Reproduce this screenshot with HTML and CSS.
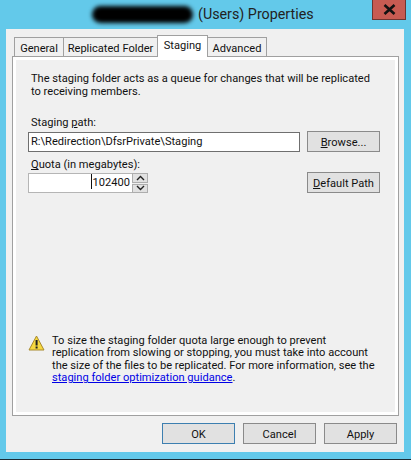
FILE: index.html
```html
<!DOCTYPE html>
<html>
<head>
    <title>(Users) Properties</title>
    <meta name="viewport" content="width=device-width, initial-scale=1.0">
    <link rel="stylesheet" href="styles.css">
</head>
<body>
    <div class="window">
        <div class="titlebar">
            <div class="title">
                <span class="redacted"></span>
                <span>(Users) Properties</span>
            </div>
            <div class="close">
                <svg width="13" height="11" viewBox="0 0 13 11"><path d="M1.5 1 L11.5 10 M11.5 1 L1.5 10" stroke="#111" stroke-width="2.6" fill="none"/></svg>
            </div>
        </div>
        <div class="dialog">
            <div class="tabs">
                <div class="tab tab-general">General</div>
                <div class="tab tab-replicated">Replicated Folder</div>
                <div class="tab tab-staging active">Staging</div>
                <div class="tab tab-advanced">Advanced</div>
            </div>
            <div class="panel">
                <div class="panel-inner">
                    <p class="intro">The staging folder acts as a queue for changes that will be replicated to receiving members.</p>
                    <div class="path-label">Staging <u>p</u>ath:</div>
                    <div class="row">
                        <div class="field path-field">R:\Redirection\DfsrPrivate\Staging</div>
                        <button class="btn side-btn"><u>B</u>rowse...</button>
                    </div>
                    <div class="quota-label"><u>Q</u>uota (in megabytes):</div>
                    <div class="row quota-row">
                        <div class="spinner">
                            <div class="field quota-field"><span class="caret"></span>102400</div>
                            <div class="spin-btns">
                                <div class="spin-btn">
                                    <svg width="9" height="6" viewBox="0 0 9 6"><path d="M1 5 L4.5 1.5 L8 5" stroke="#222" stroke-width="1.4" fill="none"/></svg>
                                </div>
                                <div class="spin-btn">
                                    <svg width="9" height="6" viewBox="0 0 9 6"><path d="M1 1 L4.5 4.5 L8 1" stroke="#222" stroke-width="1.4" fill="none"/></svg>
                                </div>
                            </div>
                        </div>
                        <button class="btn side-btn"><u>D</u>efault Path</button>
                    </div>
                    <div class="warning">
                        <svg class="warn-icon" width="17" height="16" viewBox="0 0 17 16">
                            <path d="M8.5 1 L16 15 L1 15 Z" fill="#f7d83f" stroke="#a88a2e" stroke-width="1" stroke-linejoin="round"/>
                            <rect x="7.6" y="5" width="2" height="5.5" fill="#222"/>
                            <rect x="7.6" y="11.5" width="2" height="2" fill="#222"/>
                        </svg>
                        <p class="warn-text">To size the staging folder quota large enough to prevent replication from slowing or stopping, you must take into account the size of the files to be replicated. For more information, see the <a href="#">staging folder optimization guidance</a>.</p>
                    </div>
                </div>
            </div>
            <div class="footer">
                <button class="btn foot-btn default">OK</button>
                <button class="btn foot-btn">Cancel</button>
                <button class="btn foot-btn">Apply</button>
            </div>
        </div>
        <div class="taskbar"></div>
    </div>
</body>
</html>
```

FILE: styles.css
```css
* {
    box-sizing: border-box;
}

body {
    margin: 0;
    width: 411px;
    height: 460px;
    overflow: hidden;
    font-family: Roboto, "Noto Sans", Arial, sans-serif;
    font-size: 11.1px;
    color: #111;
    background-color: #63c9ea;
}

.window {
    display: flex;
    flex-direction: column;
    height: 460px;
}

.titlebar {
    display: flex;
    height: 29px;
}

.title {
    flex: 1;
    display: flex;
    align-items: center;
    padding: 0 0 0 92px;
    gap: 5px;
    height: 28px;
    font-size: 14.3px;
    color: #222;
}

.redacted {
    width: 101px;
    height: 17px;
    background-color: #000;
    border-radius: 9px;
    filter: blur(2px);
}

.close {
    width: 34px;
    height: 20px;
    margin-right: 5px;
    display: flex;
    align-items: center;
    justify-content: center;
    background-color: #c75b52;
    border: 1px solid #6e3530;
    border-top: none;
}

.dialog {
    flex: 1;
    margin: 0 7px 0 6px;
    padding: 7px 0 0 6px;
    background-color: #f0f0f0;
    display: flex;
    flex-direction: column;
}

.tabs {
    display: flex;
    align-items: flex-end;
    height: 20px;
    padding-left: 2px;
    position: relative;
    z-index: 1;
}

.tab {
    height: 19px;
    padding-top: 2px;
    border: 1px solid #a0a0a0;
    border-bottom: none;
    background-color: #f0f0f0;
    display: flex;
    align-items: center;
    justify-content: center;
    margin-right: -1px;
    white-space: nowrap;
}

.tab-general { width: 50px; }
.tab-replicated { width: 95px; }
.tab-staging { width: 51px; }
.tab-advanced { width: 60px; }

.tab.active {
    height: 22px;
    margin-bottom: -1px;
    padding-top: 0;
    padding-bottom: 3px;
    background-color: #fff;
    position: relative;
    z-index: 2;
}

.panel {
    width: 387px;
    height: 360px;
    border: 1px solid #a0a0a0;
    background-color: #fff;
    padding: 3px;
}

.panel-inner {
    height: 100%;
    background-color: #f0f0f0;
    padding: 12px 12px 0 12px;
    display: flex;
    flex-direction: column;
}

.intro {
    margin: 0;
    padding-left: 3px;
    width: 345px;
    line-height: 13px;
}

.path-label {
    margin-top: 18px;
    padding-left: 3px;
    line-height: 14px;
}

.quota-label {
    margin-top: 6px;
    padding-left: 3px;
    line-height: 14px;
}

.row {
    display: flex;
    justify-content: space-between;
    align-items: flex-end;
    margin-top: 1px;
    width: 352px;
}

.field {
    height: 20px;
    background-color: #fff;
    border: 1px solid #6f6f6f;
    line-height: 18px;
    padding: 0 2px;
    white-space: nowrap;
}

.path-field {
    width: 272px;
}

.btn {
    font: inherit;
    color: inherit;
    background-color: #e1e1e1;
    border: 1px solid #8a8a8a;
    padding: 1px 0 0;
    height: 21px;
    text-align: center;
}

.side-btn {
    width: 73px;
}

.quota-row {
    margin-top: 0;
    align-items: flex-start;
}

.spinner {
    display: flex;
    width: 120px;
    height: 20px;
    margin-top: 1px;
}

.quota-field {
    flex: 1;
    border-color: #b5b5b5;
    border-right: none;
    text-align: right;
    padding: 0 2px 0 0;
}

.caret {
    display: inline-block;
    width: 1px;
    height: 15px;
    margin-right: 1px;
    background-color: #111;
    vertical-align: -3px;
}

.spin-btns {
    width: 16px;
    display: flex;
    flex-direction: column;
    gap: 1px;
    background-color: #f0f0f0;
}

.spin-btn {
    flex: 1;
    background-color: #e1e1e1;
    border: 1px solid #adadad;
    display: flex;
    align-items: center;
    justify-content: center;
}

.warning {
    margin-top: 142px;
    display: flex;
    gap: 7px;
}

.warn-icon {
    flex: none;
}

.warn-text {
    margin: 0;
    width: 325px;
    line-height: 12.4px;
}

.warn-text a {
    color: #0000e6;
}

.footer {
    display: flex;
    justify-content: flex-end;
    gap: 8px;
    padding: 7px 7px 0 0;
}

.foot-btn {
    width: 73px;
    height: 21px;
}

.foot-btn.default {
    border-color: #3d7fb0;
}

.taskbar {
    height: 1px;
    margin-top: 7px;
    background-color: #1a2a33;
}
```
